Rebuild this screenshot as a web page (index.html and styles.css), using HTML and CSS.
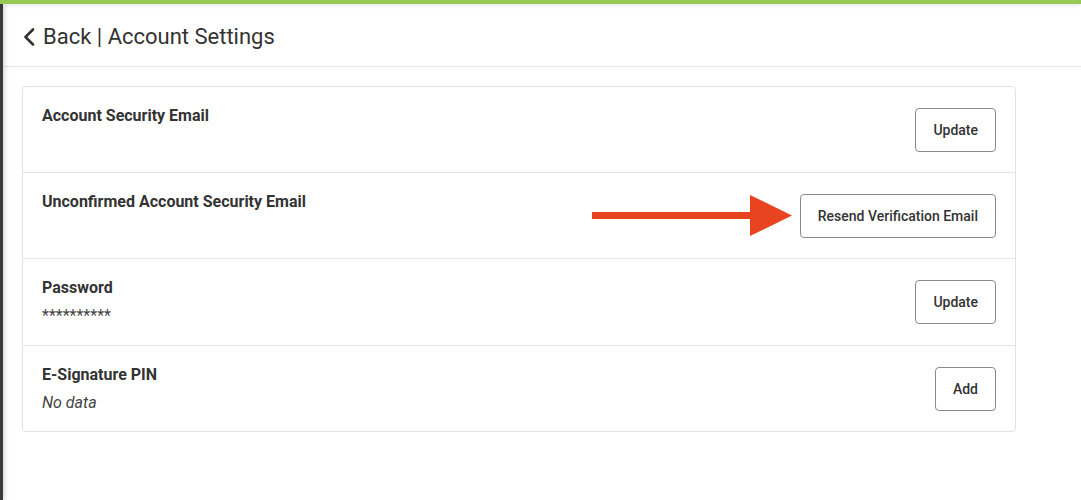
FILE: index.html
```html
<!DOCTYPE html>
<html>
<head>
<meta charset="utf-8">
<link rel="stylesheet" href="styles.css">
</head>
<body>
<div class="topbar"></div>
<div class="layout">
  <div class="sidebar"></div>
  <main class="main">
    <header class="header">
      <svg class="chev" width="12" height="18" viewBox="0 0 12 18"><path d="M10 1.5 L2.5 9 L10 16.5" fill="none" stroke="#333" stroke-width="2.6" stroke-linecap="round" stroke-linejoin="round"/></svg>
      <span class="title">Back | Account Settings</span>
    </header>
    <section class="card">
      <div class="row">
        <div class="info"><div class="label">Account Security Email</div></div>
        <button class="btn">Update</button>
      </div>
      <div class="row">
        <div class="info"><div class="label">Unconfirmed Account Security Email</div></div>
        <button class="btn">Resend Verification Email</button>
        <svg class="arrow" width="202" height="42" viewBox="0 0 202 42"><rect x="0" y="17" width="162" height="7" fill="#e8441f"/><polygon points="158,0 200,20.5 158,41" fill="#e8441f"/></svg>
      </div>
      <div class="row">
        <div class="info"><div class="label">Password</div><div class="value">**********</div></div>
        <button class="btn">Update</button>
      </div>
      <div class="row">
        <div class="info"><div class="label">E-Signature PIN</div><div class="value italic">No data</div></div>
        <button class="btn">Add</button>
      </div>
    </section>
  </main>
</div>
</body>
</html>
```
FILE: styles.css
```css
html, body { margin: 0; padding: 0; background: #fff; }
body { font-family: Roboto, "Liberation Sans", sans-serif; color: #333; width: 1081px; height: 500px; overflow: hidden; }
.topbar { height: 4px; background: #95c855; position: relative; z-index: 2; box-shadow: 0 1px 5px rgba(0,0,0,0.12); }
.layout { display: flex; height: 496px; }
.sidebar { width: 3px; background: #3a3a3a; box-shadow: 1px 0 5px rgba(0,0,0,0.25); position: relative; z-index: 1; }
.main { flex: 1; }
.header { height: 63px; border-bottom: 1px solid #e4e4e4; display: flex; align-items: center; padding: 3px 0 0 20px; gap: 8px; box-sizing: border-box; }
.chev { display: block; margin-top: 1px; }
.title { font-size: 22px; color: #333; letter-spacing: 0; }
.card { margin: 19px 0 0 19px; width: 994px; box-sizing: border-box; border: 1px solid #e2e2e2; border-radius: 4px; }
.row { position: relative; height: 86px; display: flex; align-items: center; justify-content: space-between; padding: 0 19px 0 19px; box-sizing: border-box; border-top: 1px solid #e4e4e4; }
.row:first-child { border-top: none; height: 85px; }
.row:nth-child(3) { height: 87px; }
.info { align-self: flex-start; padding-top: 19px; }
.label { font-size: 16px; font-weight: 700; line-height: 19px; color: #333; }
.value { font-size: 16px; line-height: 19px; margin-top: 9px; color: #444; }
.italic { font-style: italic; }
.btn { height: 44px; padding: 0 17px; border: 1px solid #8a8a8a; border-radius: 4px; background: #fff; font-family: Roboto, "Liberation Sans", sans-serif; font-size: 14px; font-weight: 500; color: #333; }
.arrow { position: absolute; left: 569px; top: 22px; }
```
